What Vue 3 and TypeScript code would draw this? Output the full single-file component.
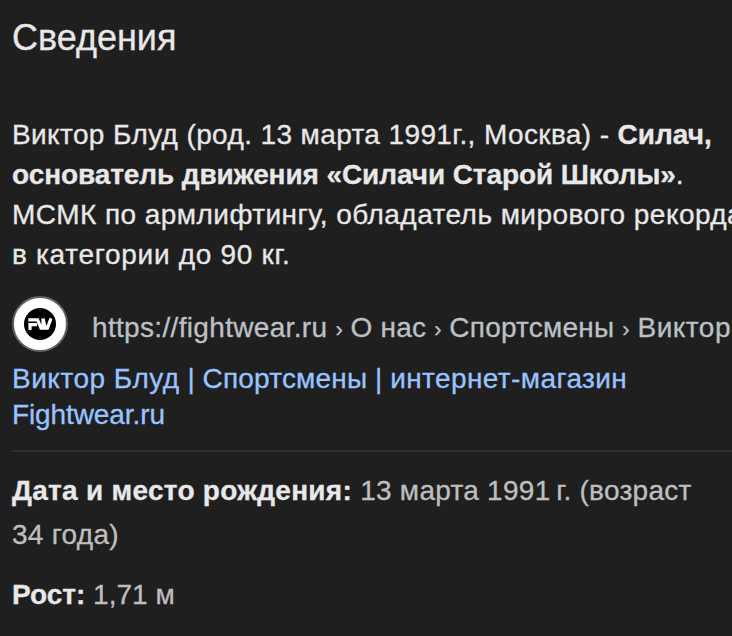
<script setup lang="ts">
interface Fact {
  label: string
  lines: string[]
  kind: string
}

const host = 'https://fightwear.ru'
const crumbs: string[] = ['О нас', 'Спортсмены', 'Виктор']
const facts: Fact[] = [
  { label: 'Дата и место рождения:', lines: ['13 марта 1991\u2009г. (возраст', '34 года)'], kind: 'birth' },
  { label: 'Рост:', lines: ['1,71 м'], kind: 'height' },
]
</script>

<template>
  <main class="panel">
    <h2 class="title">Сведения</h2>
    <p class="summary">
      <span class="line intro">Виктор Блуд (род. 13 марта 1991г., Москва) - <b>Силач,</b></span>
      <span class="line founder"><b>основатель движения «Силачи Старой Школы»</b>.</span>
      <span class="line record">МСМК по армлифтингу, обладатель мирового рекорда</span>
      <span class="line category">в категории до 90 кг.</span>
    </p>
    <div class="source">
      <svg class="favicon" viewBox="0 0 56 56" aria-hidden="true">
        <circle cx="28" cy="28" r="27" fill="#fff" stroke="#5f6063" stroke-width="2" />
        <circle cx="28" cy="28" r="16" fill="#000" />
        <g fill="none" stroke="#fff" stroke-width="3.2">
          <path d="M18 34V28.6H25M16.3 23.8H25.6L29 32.2H31V22.4" />
          <path d="M31 23l2.4 9.2H35.4L39 22.4" />
        </g>
      </svg>
      <div class="crumbs"><span class="host">{{ host }}</span><template v-for="(crumb, i) in crumbs" :key="crumb"><span class="sep">›</span> <span class="crumb" :class="{ last: i === crumbs.length - 1 }">{{ crumb }}</span></template></div>
    </div>
    <a class="link"><span class="name">Виктор Блуд</span> | <span class="section">Спортсмены</span> | <span class="shop">интернет-магазин</span><br /><span class="site">Fightwear.ru</span></a>
    <div class="facts">
      <p v-for="fact in facts" :key="fact.kind" class="fact" :class="fact.kind">
        <b>{{ fact.label }}</b> <template v-for="(line, i) in fact.lines" :key="line"><br v-if="i > 0" />{{ line }}</template>
      </p>
    </div>
  </main>
</template>

<style>
body {
  background: #1f1f1f;
  overflow: hidden;
}
</style>

<style scoped>
.panel {
  box-sizing: border-box;
  width: 732px;
  height: 636px;
  padding: 16px 0 0 12px;
  overflow: hidden;
  background: #1f1f1f;
  color: #e8e8e8;
  font-family: "Liberation Sans", Arial, sans-serif;
  font-size: 28px;
  -webkit-text-stroke: 0.3px currentColor;
}
.title {
  margin: 0;
  font-size: 36px;
  font-weight: 400;
  line-height: 44px;
}
.summary {
  margin: 55px 0 0;
  line-height: 40px;
}
.line {
  display: block;
  white-space: nowrap;
}
.intro {
  letter-spacing: 0.38px;
}
.intro b {
  letter-spacing: 0;
}
.founder {
  letter-spacing: -0.09px;
}
.record {
  letter-spacing: 0.45px;
}
.category {
  letter-spacing: 0.7px;
}
.source {
  display: flex;
  align-items: center;
  gap: 24px;
  margin-top: 21px;
  height: 56px;
}
.favicon {
  flex: none;
  width: 56px;
  height: 56px;
}
.crumbs {
  padding-top: 8px;
  color: #bdc1c6;
  line-height: 36px;
  white-space: nowrap;
}
.host {
  letter-spacing: 0.33px;
}
.sep {
  margin-left: 8px;
  font-size: 22px;
  line-height: 1;
}
.crumb {
  letter-spacing: 0.22px;
}
.crumb.last {
  letter-spacing: 0.5px;
}
.link {
  display: block;
  margin-top: 9px;
  color: #99c3ff;
  line-height: 36px;
}
.name {
  letter-spacing: 0.5px;
}
.section {
  letter-spacing: 0.2px;
}
.shop {
  letter-spacing: 0.4px;
}
.site {
  letter-spacing: -0.1px;
}
.facts {
  margin-top: 17px;
  padding-top: 17px;
  border-top: 2px solid #303134;
  color: #bfbfbf;
}
.fact {
  margin: 0 0 16px;
  line-height: 44px;
}
.fact b {
  color: #e8e8e8;
}
.birth {
  letter-spacing: 0.27px;
}
</style>
